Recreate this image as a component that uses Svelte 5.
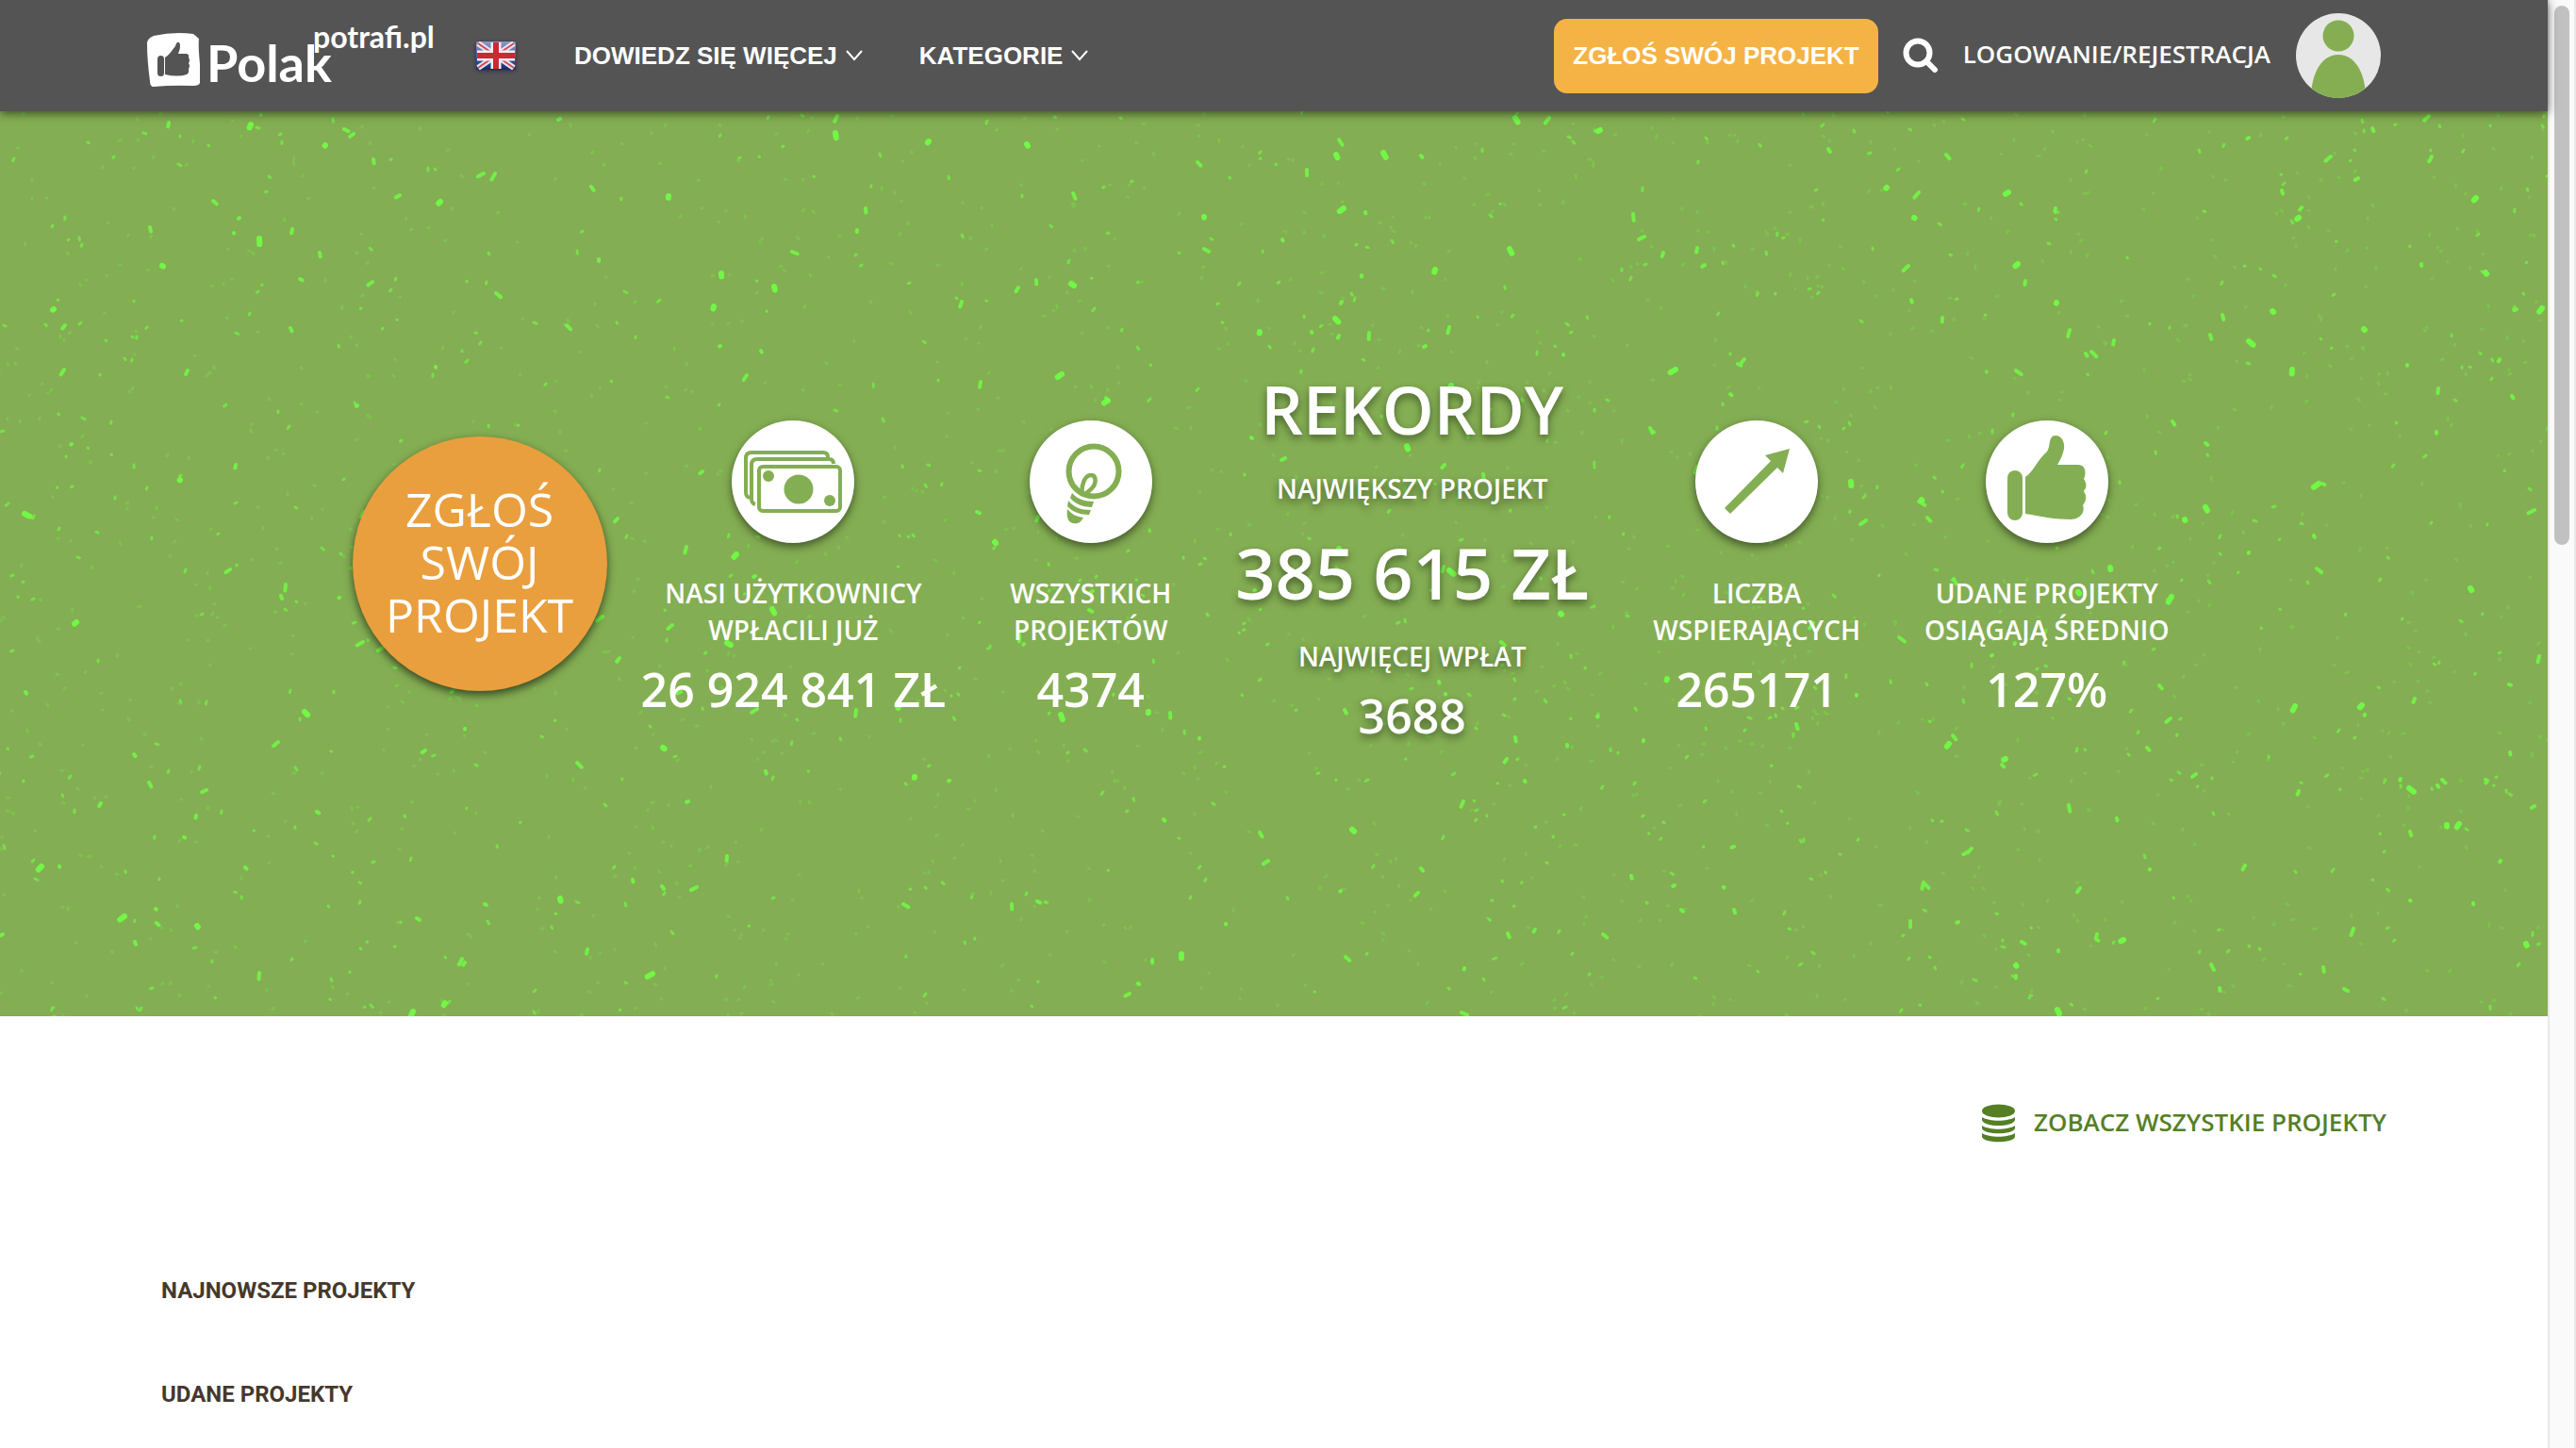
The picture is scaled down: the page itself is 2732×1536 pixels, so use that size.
<script>
  const stats = [
    { icon: 'cash', label: ['NASI UŻYTKOWNICY', 'WPŁACILI JUŻ'], value: '26 924 841 ZŁ' },
    { icon: 'bulb', label: ['WSZYSTKICH', 'PROJEKTÓW'], value: '4374' },
    { icon: 'records' },
    { icon: 'arrow', label: ['LICZBA', 'WSPIERAJĄCYCH'], value: '265171' },
    { icon: 'thumb', label: ['UDANE PROJEKTY', 'OSIĄGAJĄ ŚREDNIO'], value: '127%' }
  ];

  // Confetti texture: short rounded strokes, grouped by thickness.
  let seed = 4217;
  function rand() {
    seed = (seed * 1664525 + 1013904223) % 4294967296;
    return seed / 4294967296;
  }
  function strokes(count, length, steep) {
    let d = '';
    for (let i = 0; i < count; i++) {
      const x = Math.round(rand() * 2732);
      const y = Math.round(rand() * 960);
      const a = (rand() - 0.5) * steep + Math.PI / 2;
      const l = 0.5 + rand() * length;
      d += `M${x} ${y}l${(Math.cos(a) * l).toFixed(1)} ${(Math.sin(a) * l).toFixed(1)}`;
    }
    return d;
  }
  const specks = [
    { kind: 'faint', d: strokes(1500, 2, 3) },
    { kind: 'small', d: strokes(750, 3, 2.6) },
    { kind: 'medium', d: strokes(280, 7, 2.4) },
    { kind: 'large', d: strokes(90, 6, 2.2) }
  ];
</script>

<div class="page">
  <div class="content">
    <header>
      <a class="logo" href="/" aria-label="PolakPotrafi.pl">
        <svg viewBox="0 0 308 90" width="308" height="90">
          <path class="white" d="M8 20Q30 15 50 18L56 23Q55 30 57 50L57 70Q56 73 50 73Q28 72 8 74Q4 74 4 68Q1 45 1 30Q0 23 8 20Z" />
          <rect class="dark" x="12" y="41" width="7" height="22" rx="3.5" />
          <path class="dark" d="M20 43C27 38 28 34 31 31C32 26 36 25 36 31C36 35 34 38 34 39H42Q46 39 45 43Q47 46 45 49Q47 52 45 55Q46 59 43 61Q34 64 20 61Z" />
          <text class="polak" x="64" y="69">Polak</text>
          <text class="potrafi" x="177" y="33">potrafi.pl</text>
        </svg>
      </a>
      <a class="flag" href="/en" aria-label="English">
        <svg viewBox="0 0 42 30" width="42" height="30">
          <defs>
            <linearGradient id="sky" x1="0" y1="0" x2="0" y2="1">
              <stop offset="0" stop-color="#8b9ac6" />
              <stop offset="1" stop-color="#14286f" />
            </linearGradient>
          </defs>
          <rect width="42" height="30" rx="2" fill="url(#sky)" />
          <path d="M2 2L40 28M40 2L2 28" stroke="#e9e6ee" stroke-width="6" />
          <path d="M2 2L40 28M40 2L2 28" stroke="#d6485a" stroke-width="2" />
          <path d="M21 1V29M1 15H41" stroke="#f1edf1" stroke-width="11" />
          <path d="M21 1V29M1 15H41" stroke="#c92a35" stroke-width="6" />
        </svg>
      </a>
      <nav>
        <button class="menu">DOWIEDZ SIĘ WIĘCEJ
          <svg viewBox="0 0 18 12" width="18" height="12"><path d="M1 1L9 10L17 1" /></svg>
        </button>
        <button class="menu">KATEGORIE
          <svg viewBox="0 0 18 12" width="18" height="12"><path d="M1 1L9 10L17 1" /></svg>
        </button>
      </nav>
      <button class="submit">ZGŁOŚ SWÓJ PROJEKT</button>
      <button class="search" aria-label="Szukaj">
        <svg viewBox="0 0 38 38" width="38" height="38">
          <circle cx="16" cy="16" r="12.5" /><path d="M25 25L34 34" />
        </svg>
      </button>
      <a class="login" href="/login">LOGOWANIE/REJESTRACJA</a>
      <a class="avatar" href="/profil" aria-label="Profil">
        <svg viewBox="0 0 90 90" width="90" height="90">
          <defs><clipPath id="disc"><circle cx="45" cy="45" r="45" /></clipPath></defs>
          <g clip-path="url(#disc)">
            <rect width="90" height="90" fill="#e7e7e7" />
            <circle cx="45" cy="24" r="16.5" fill="#84ae51" />
            <path d="M16 90C16 66 26 44 45 44S74 66 74 90Z" fill="#84ae51" />
          </g>
        </svg>
      </a>
    </header>

    <section class="hero">
      <svg class="texture" viewBox="0 0 2732 960" preserveAspectRatio="xMidYMid slice" aria-hidden="true">
        {#each specks as s}
          <path class={s.kind} d={s.d} />
        {/each}
      </svg>
      <a class="round" href="/zglos">ZGŁOŚ<br />SWÓJ<br />PROJEKT</a>
      {#each stats as s}
        {#if s.icon === 'records'}
          <div class="records">
            <h1>REKORDY</h1>
            <p class="label">NAJWIĘKSZY PROJEKT</p>
            <strong class="big">385 615 ZŁ</strong>
            <p class="label">NAJWIĘCEJ WPŁAT</p>
            <strong class="value">3688</strong>
          </div>
        {:else}
          <div class="stat">
            <svg class="badge" viewBox="0 0 130 130" width="130" height="130">
              {#if s.icon === 'cash'}
                <g class="line" stroke-width="4">
                  <path d="M19 82Q15 81 15 76V40Q15 34 21 34H97Q102 34 102 39" />
                  <path d="M25 89Q21 88 21 83V47Q21 41 27 41H103Q108 41 108 46" />
                  <rect x="29" y="49" width="86" height="47" rx="4" />
                </g>
                <g class="fill">
                  <circle cx="71" cy="73" r="15.5" />
                  <circle cx="39" cy="59" r="6" />
                  <circle cx="104" cy="85" r="6" />
                </g>
              {:else if s.icon === 'bulb'}
                <g class="line">
                  <circle cx="68" cy="54" r="26.5" stroke-width="6" />
                  <path d="M56 80C54 68 59 58 65 58C71 58 71 67 66 72C63 75 60 77 58 79" stroke-width="4.5" />
                </g>
                <g class="fill">
                  <path d="M45 77C50 83 58 86 68 86L66 92C56 92 47 88 43 82Z" />
                  <path d="M41 85C47 92 54 95 65 95L63 100C54 100 45 97 40 91Z" />
                  <path d="M40 94C45 100 50 102 57 103C54 109 50 110 46 109C40 108 39 101 40 94Z" />
                </g>
              {:else if s.icon === 'arrow'}
                <path class="fill" d="M31 93L80 43L74 37L100 30L93 56L87 50L37 99Z" />
              {:else}
                <g class="fill">
                  <rect x="23" y="53" width="16" height="53" rx="8" />
                  <path d="M42 60C51 54 53 44 65 33C69 28 66 16 74 16C80 16 84 22 83 30C82 36 79 42 76 47H98C106 47 107 56 104 62Q109 69 104 75Q109 83 103 90C106 98 99 105 90 105C74 105 60 102 42 99Z" />
                </g>
              {/if}
            </svg>
            <p class="label">{s.label[0]}<br />{s.label[1]}</p>
            <strong class="value">{s.value}</strong>
          </div>
        {/if}
      {/each}
    </section>

    <main>
      <a class="all" href="/projekty">
        <svg viewBox="0 0 35 41" width="35" height="41">
          <ellipse cx="17.5" cy="7.5" rx="17.5" ry="7" />
          <path d="M0 14C8 19 27 19 35 14V17C33 25 2 25 0 17Z" />
          <path d="M0 23C8 28 27 28 35 23V26C33 33 2 33 0 26Z" />
          <path d="M0 31C8 36 27 36 35 31V35C33 42 2 42 0 35Z" />
        </svg>
        <span>ZOBACZ WSZYSTKIE PROJEKTY</span>
      </a>
      <h2>NAJNOWSZE PROJEKTY</h2>
      <h2>UDANE PROJEKTY</h2>
    </main>
  </div>
  <div class="scrollbar" aria-hidden="true"><div class="thumb"></div></div>
</div>

<style>
  :global(body) { background: #fff; overflow: hidden; }
  .page {
    display: flex;
    height: 100vh;
    overflow: hidden;
    font-family: 'Open Sans', 'Noto Sans', sans-serif;
    color: #fff;
  }
  .content { flex: 1; min-width: 0; }
  a { color: inherit; text-decoration: none; }
  button { border: 0; background: none; color: inherit; padding: 0; cursor: pointer; white-space: nowrap; }
  svg { display: block; flex: none; }
  p, h1, h2 { margin: 0; }

  header {
    position: relative;
    z-index: 1;
    display: flex;
    align-items: center;
    height: 118px;
    padding: 0 177px 0 155px;
    background: #545454;
    box-shadow: 0 2px 10px rgba(0, 0, 0, 0.6);
  }
  .white { fill: #fff; }
  .dark { fill: #545454; }
  .polak { font: 700 54px Lato, sans-serif; fill: #fff; }
  .potrafi { font: 700 32px Lato, sans-serif; fill: #fff; }
  .logo { margin-top: 8px; }
  .flag { margin-left: 42px; border-radius: 3px; box-shadow: 0 1px 4px rgba(10, 20, 60, 0.6); }
  nav { display: flex; gap: 60px; margin: 0 auto 0 62px; }
  .menu, .submit { font: 700 26px 'Liberation Sans', Arial, sans-serif; }
  .menu { display: flex; align-items: center; gap: 9px; }
  .menu path { fill: none; stroke: #fff; stroke-width: 2; }
  .submit { height: 79px; padding: 0 20px; border-radius: 14px; background: #f5b346; }
  .search { margin: 0 26px 0 26px; }
  .search svg { fill: none; stroke: #fff; stroke-width: 6; stroke-linecap: round; }
  .login { padding-bottom: 4px; font-size: 26px; font-weight: 600; white-space: nowrap; }
  .avatar { margin-left: 27px; }

  .hero {
    position: relative;
    display: flex;
    justify-content: center;
    align-items: flex-start;
    height: 960px;
    padding: 280px 0 0 6px;
    box-sizing: border-box;
    background: #84ae53;
    text-align: center;
    white-space: nowrap;
  }
  .texture { position: absolute; inset: 0; width: 100%; height: 100%; fill: none; stroke: #6fff45; stroke-linecap: round; }
  .faint { stroke-width: 3; opacity: 0.25; }
  .small { stroke-width: 3; opacity: 0.6; }
  .medium { stroke-width: 4; opacity: 0.8; }
  .large { stroke-width: 6; opacity: 0.9; }
  .round, .stat, .records { position: relative; }
  .round {
    display: flex;
    align-items: center;
    justify-content: center;
    width: 270px;
    height: 270px;
    margin: 65px 2px 0 0;
    padding-bottom: 4px;
    box-sizing: border-box;
    border-radius: 50%;
    background: #e99f3e;
    box-shadow: 0 4px 10px rgba(0, 0, 0, 0.6);
    font-size: 50px;
    line-height: 56px;
  }
  .stat, .records { display: flex; flex-direction: column; align-items: center; padding: 0 34px; }
  .stat { margin-top: 48px; }
  .badge { border-radius: 50%; background: #fff; box-shadow: 0 4px 10px rgba(0, 0, 0, 0.5); }
  .line { fill: none; stroke: #84ae53; }
  .fill { fill: #84ae53; }
  .label { font-size: 28px; line-height: 39px; font-weight: 600; }
  .value { font-size: 50px; line-height: 52px; font-weight: 600; margin-top: 17px; }
  .stat .label { margin-top: 34px; }
  .records { text-shadow: 0 4px 8px rgba(0, 0, 0, 0.45); }
  h1 { font-size: 70px; line-height: 72px; font-weight: 600; margin-bottom: 29px; }
  .big { font-size: 74px; line-height: 76px; font-weight: 600; margin: 32px 0 31px; }

  main { display: flex; flex-direction: column; padding: 93px 171px 0; }
  .all {
    display: flex;
    align-items: center;
    align-self: flex-end;
    gap: 20px;
    margin-bottom: 137px;
    color: #557f25;
    font-size: 26px;
    line-height: 36px;
    font-weight: 600;
  }
  .all svg { fill: #557f25; }
  .all span { padding-bottom: 4px; }
  h2 {
    margin-bottom: 70px;
    color: #46382a;
    font: 700 24px/40px Roboto, 'Open Sans', sans-serif;
  }

  .scrollbar { width: 26px; flex: none; border: 2px solid #e8e8e8; border-width: 0 2px; background: #fafafa; }
  .thumb { width: 16px; height: 572px; margin: 6px auto 0; border-radius: 8px; background: #c1c1c1; }
</style>
